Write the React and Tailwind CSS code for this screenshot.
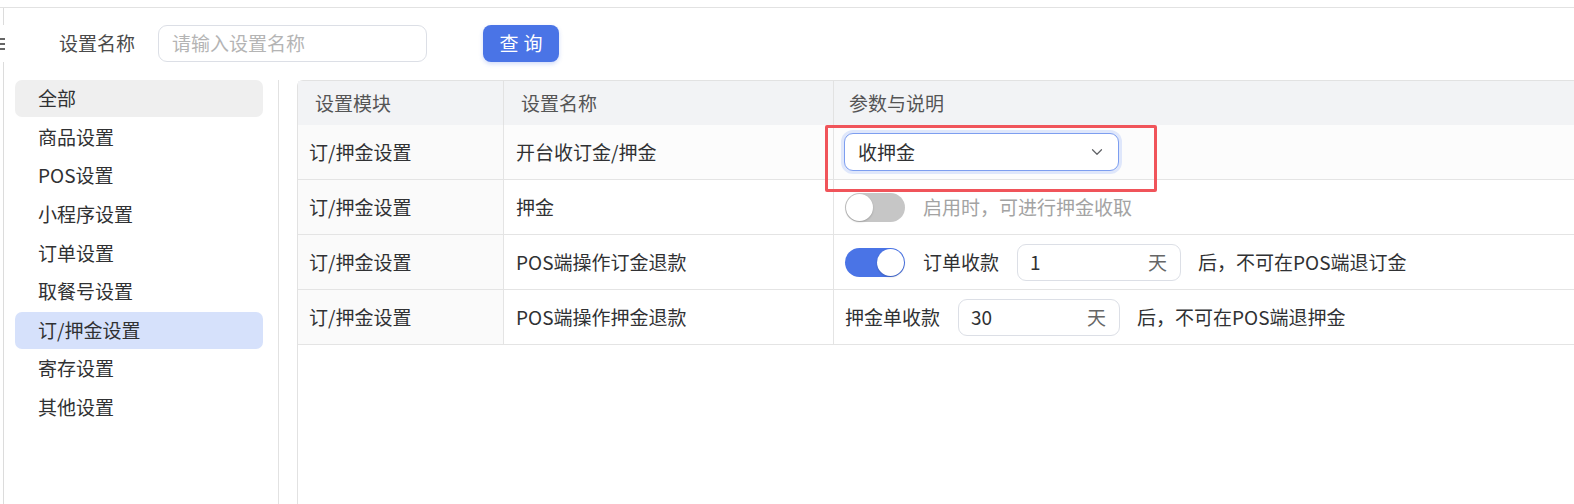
import React from "react";
import { ChevronDown } from "lucide-react";

const menus = [
	"全部",
	"商品设置",
	"POS设置",
	"小程序设置",
	"订单设置",
	"取餐号设置",
	"订/押金设置",
	"寄存设置",
	"其他设置",
];

function Toggle({ on }) {
	return (
		<div
			className={`w-[60px] h-[29px] rounded-full p-[1px] flex items-center shrink-0 ${
				on ? "bg-[#4a74e6] justify-end" : "bg-[#c6c6c6] justify-start"
			}`}
		>
			<div className="w-[27px] h-[27px] rounded-full bg-white shadow-[0_1px_2px_rgba(0,0,0,0.2)]"></div>
		</div>
	);
}

function DayInput({ value, width }) {
	return (
		<div
			className={`${width} h-[37px] border border-[#dcdfe6] rounded-[9px] flex items-center justify-between pl-[12px] pr-[13px] bg-white`}
		>
			<span className="text-[#303133]">{value}</span>
			<span className="text-[#666]">天</span>
		</div>
	);
}

export default function App() {
	const rows = [
		{ name: "开台收订金/押金", type: "select" },
		{ name: "押金", type: "switch" },
		{ name: "POS端操作订金退款", type: "refund" },
		{ name: "POS端操作押金退款", type: "deposit" },
	];

	return (
		<div
			className="w-full h-[504px] bg-white flex flex-col overflow-hidden text-[19px] text-[#303133]"
			style={{ fontFamily: '"Noto Sans CJK SC", "Noto Sans", sans-serif' }}
		>
			<div className="h-[7px] shrink-0"></div>
			<div className="flex-1 flex border-t border-[#e2e2e2] min-h-0">
				{/* collapsed left edge */}
				<div className="w-[4px] shrink-0 flex flex-col">
					<div className="h-[17px] border-r border-[#dcdcdc]"></div>
					<div className="h-[37px] flex flex-col justify-center gap-[3px]">
						<div className="w-[5px] h-[2px] bg-[#666]"></div>
						<div className="w-[5px] h-[2px] bg-[#666]"></div>
						<div className="w-[5px] h-[2px] bg-[#666]"></div>
					</div>
					<div className="flex-1 border-r border-[#dcdcdc]"></div>
				</div>

				<div className="flex-1 flex flex-col min-w-0">
					{/* Search bar */}
					<div className="flex items-center h-[37px] mt-[17px] pl-[55px]">
						<span className="text-[#4a4a4a]">设置名称</span>
						<div className="ml-[23px] w-[269px] h-[37px] border border-[#dcdfe6] rounded-[9px] flex items-center pl-[13px] text-[#b4b4b4]">
							请输入设置名称
						</div>
						<button className="ml-[56px] w-[76px] h-[37px] rounded-[8px] bg-[#4a74e6] text-white shadow-[0_2px_4px_rgba(74,116,230,0.25)] tracking-[5px] pl-[5px]">
							查询
						</button>
					</div>

					<div className="flex-1 flex mt-[18px] min-h-0">
						{/* Sidebar */}
						<div className="w-[275px] shrink-0 border-r border-[#e2e2e2] pl-[11px] pr-[15px] flex flex-col gap-[1.6px]">
							{menus.map((m, i) => (
								<div
									key={m}
									className={`h-[37px] rounded-[7px] flex items-center pl-[23px] ${
										i === 0 ? "bg-[#efefef]" : i === 6 ? "bg-[#d6e1fb]" : ""
									}`}
								>
									{m}
								</div>
							))}
						</div>

						{/* Table */}
						<div className="flex-1 ml-[18px] border-l border-t border-[#e2e2e2] rounded-tl-[6px] min-w-0">
							<div className="flex h-[44px] bg-[#f2f3f5] text-[#555]">
								<div className="w-[206px] shrink-0 border-r border-[#e2e2e2] flex items-center pl-[17px]">
									设置模块
								</div>
								<div className="w-[330px] shrink-0 border-r border-[#e2e2e2] flex items-center pl-[17px]">
									设置名称
								</div>
								<div className="flex-1 flex items-center pl-[15px]">参数与说明</div>
							</div>
							{rows.map((r, i) => (
								<div
									key={r.name}
									className={`flex h-[55px] border-b border-[#e4e4e4] ${
										i === 0 ? "bg-[#fcfcfc]" : ""
									}`}
								>
									<div className="w-[206px] shrink-0 border-r border-[#e4e4e4] bg-[#fafafa] flex items-center pl-[11px]">
										订/押金设置
									</div>
									<div className="w-[330px] shrink-0 border-r border-[#e4e4e4] flex items-center pl-[12px]">
										{r.name}
									</div>
									<div className="flex-1 flex items-center pl-[10px] relative">
										{r.type === "select" && (
											<>
												<div className="w-[275px] h-[38px] border border-[#7d9ef0] rounded-[9px] ring-[3px] ring-[#dfe7fb] flex items-center justify-between pl-[13px] pr-[12px] bg-white">
													<span>收押金</span>
													<ChevronDown className="w-[18px] h-[18px] text-[#606266]" strokeWidth={1.6} />
												</div>
												<div className="absolute left-[-9px] top-0 w-[332px] h-[67px] border-[3px] border-[#f0545a] rounded-[2px] z-10 pointer-events-none"></div>
											</>
										)}
										{r.type === "switch" && (
											<div className="flex items-center gap-[18px] pl-[1px]">
												<Toggle on={false} />
												<span className="text-[#a3a3a3]">启用时，可进行押金收取</span>
											</div>
										)}
										{r.type === "refund" && (
											<div className="flex items-center gap-[18px] pl-[1px]">
												<Toggle on={true} />
												<span>订单收款</span>
												<DayInput value="1" width="w-[164px]" />
												<span className="-ml-[1px]">后，不可在POS端退订金</span>
											</div>
										)}
										{r.type === "deposit" && (
											<div className="flex items-center gap-[18px] pl-[1px]">
												<span>押金单收款</span>
												<DayInput value="30" width="w-[162px]" />
												<span className="-ml-[1px]">后，不可在POS端退押金</span>
											</div>
										)}
									</div>
								</div>
							))}
						</div>
					</div>
				</div>
			</div>
		</div>
	);
}
